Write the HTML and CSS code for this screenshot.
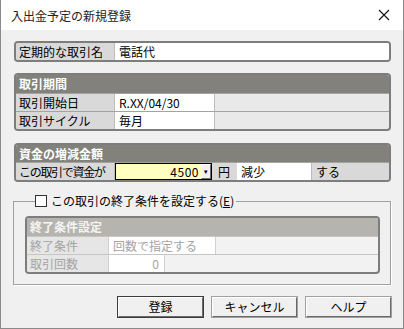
FILE: index.html
```html
<!DOCTYPE html>
<html lang="ja">
<head>
  <meta charset="UTF-8">
  <title>入出金予定の新規登録</title>
  <link rel="stylesheet" href="styles.css">
</head>
<body>
  <div class="window">
    <!-- Title bar -->
    <div class="title-bar">
      <span class="title">入出金予定の新規登録</span>
      <svg class="close" width="12" height="12" viewBox="0 0 12 12">
        <path d="M1 1 L11 11 M11 1 L1 11" stroke="#111" stroke-width="1.1" fill="none"/>
      </svg>
    </div>

    <div class="content">
      <!-- Name -->
      <div class="panel">
        <div class="row">
          <div class="label">定期的な取引名</div>
          <div class="value fill">電話代</div>
        </div>
      </div>

      <!-- Period -->
      <div class="panel group">
        <div class="group-head">取引期間</div>
        <div class="row">
          <div class="label">取引開始日</div>
          <div class="value date">R.XX/04/30</div>
          <div class="rest"></div>
        </div>
        <div class="row">
          <div class="label">取引サイクル</div>
          <div class="value date">毎月</div>
          <div class="rest"></div>
        </div>
      </div>

      <!-- Amount -->
      <div class="panel group money">
        <div class="group-head">資金の増減金額</div>
        <div class="row">
          <div class="label narrow">この取引で資金が</div>
          <div class="amount">
            <span class="amount-text">4500</span>
            <span class="spin">&#9662;</span>
          </div>
          <div class="unit">円</div>
          <div class="value change">減少</div>
          <div class="label tail">する</div>
        </div>
      </div>

      <!-- End condition -->
      <fieldset class="end-box">
        <legend class="end-legend">
          <span class="check"></span>
          <span>この取引の終了条件を設定する(<u>E</u>)</span>
        </legend>
        <div class="panel group disabled">
          <div class="group-head">終了条件設定</div>
          <div class="row">
            <div class="label">終了条件</div>
            <div class="value cond">回数で指定する</div>
            <div class="rest"></div>
          </div>
          <div class="row">
            <div class="label">取引回数</div>
            <div class="value count">0</div>
            <div class="rest"></div>
          </div>
        </div>
      </fieldset>

      <!-- Buttons -->
      <div class="buttons">
        <button class="btn default">登録</button>
        <button class="btn">キャンセル</button>
        <button class="btn">ヘルプ</button>
      </div>
    </div>
  </div>
</body>
</html>
```

FILE: styles.css
```css
body {
  margin: 0;
  padding: 0;
  font-family: "Noto Sans CJK JP", "Noto Sans", sans-serif;
  font-size: 12px;
  color: #000;
  background-color: #f0f0f0;
}

.window {
  width: 402px;
  height: 328px;
  border: 1px solid #8a8a8a;
  border-top: none;
  background-color: #f0f0f0;
}

.title-bar {
  height: 30px;
  background-color: #fff;
  display: flex;
  align-items: center;
  justify-content: space-between;
  padding: 0 13px 0 10px;
}

.title {
  font-size: 12px;
  color: #222;
}

.content {
  padding: 11px 12px 0 13px;
}

.panel {
  border: 2px solid #7d7d7d;
  border-radius: 4px;
  background-color: #e9e9e9;
  overflow: hidden;
}

.group {
  margin-top: 11px;
}

.group-head {
  height: 18px;
  line-height: 18px;
  background-color: #82817b;
  color: #fff;
  font-weight: bold;
  padding-left: 3px;
}

.row {
  display: flex;
  height: 17px;
  line-height: 17px;
}

.group .row {
  border-top: 1px solid #a3a3a3;
}

.label {
  width: 95px;
  padding-left: 3px;
  background-color: #d9d9d9;
  border-right: 1px solid #bdbdbd;
  white-space: nowrap;
  overflow: hidden;
}

.narrow {
  letter-spacing: -1.3px;
}

.value {
  background-color: #fff;
  padding-left: 4px;
}

.fill {
  flex: 1;
}

.date {
  width: 95px;
  border-right: 1px solid #bdbdbd;
}

.rest {
  flex: 1;
}

/* amount row */
.money {
  margin-top: 12px;
}

.money .group-head {
  height: 17px;
  line-height: 17px;
}

.amount {
  display: flex;
  width: 95px;
  height: 15px;
  border: 1px solid #000;
  background-color: #ffffc0;
}

.amount-text {
  flex: 1;
  text-align: right;
  line-height: 15px;
  padding-right: 1px;
  letter-spacing: 0.5px;
  white-space: nowrap;
}

.spin {
  width: 8px;
  height: 13px;
  margin-left: 1px;
  background-color: #f0f0f0;
  border: 1px solid;
  border-color: #fff #6d6d6d #6d6d6d #fff;
  font-size: 7px;
  line-height: 13px;
  text-align: center;
  color: #000;
}

.unit {
  width: 25px;
  padding-left: 6px;
  box-sizing: border-box;
  background-color: #d9d9d9;
}

.change {
  width: 70px;
  border-right: 1px solid #bdbdbd;
}

.tail {
  flex: 1;
  padding-left: 4px;
  border-right: none;
}

/* fieldset */
.end-box {
  margin: 12px 0 0 -1px;
  padding: 0 10px 10px 11px;
  border: 1px solid #a0a0a0;
  box-shadow: 1px 1px 0 #fff;
  min-width: 0;
}

.end-legend {
  margin-left: 10px;
  padding: 0 2px 0 0;
  display: flex;
  align-items: center;
  gap: 4px;
  line-height: 14px;
}

.check {
  width: 10px;
  height: 10px;
  border: 1px solid #333;
  background-color: #fff;
}

.disabled {
  margin-top: 8px;
  color: #a3a3a3;
  background-color: #f2f2f2;
}

.disabled .group-head {
  background-color: #b6b4ae;
  color: #f4f4f4;
}

.disabled .label {
  width: 78px;
  background-color: #e6e6e6;
  border-right-color: #d0d0d0;
}

.disabled .row {
  border-top-color: #c6c6c6;
}

.cond {
  width: 102px;
  border-right: 1px solid #d0d0d0;
}

.count {
  width: 46px;
  text-align: right;
  padding-right: 5px;
  border-right: 1px solid #d0d0d0;
}

/* buttons */
.buttons {
  display: flex;
  justify-content: flex-end;
  gap: 9px;
  margin-top: 12px;
}

.btn {
  width: 85px;
  height: 20px;
  font-family: "Noto Sans CJK JP", "Noto Sans", sans-serif;
  font-size: 12px;
  background-color: #f0f0f0;
  border: 1px solid;
  border-color: #fff #696969 #696969 #fff;
  box-shadow: 0 0 0 1px #a0a0a0;
  padding: 0;
  line-height: 16px;
}

.default {
  box-shadow: 0 0 0 1px #3c3c3c;
}
```
